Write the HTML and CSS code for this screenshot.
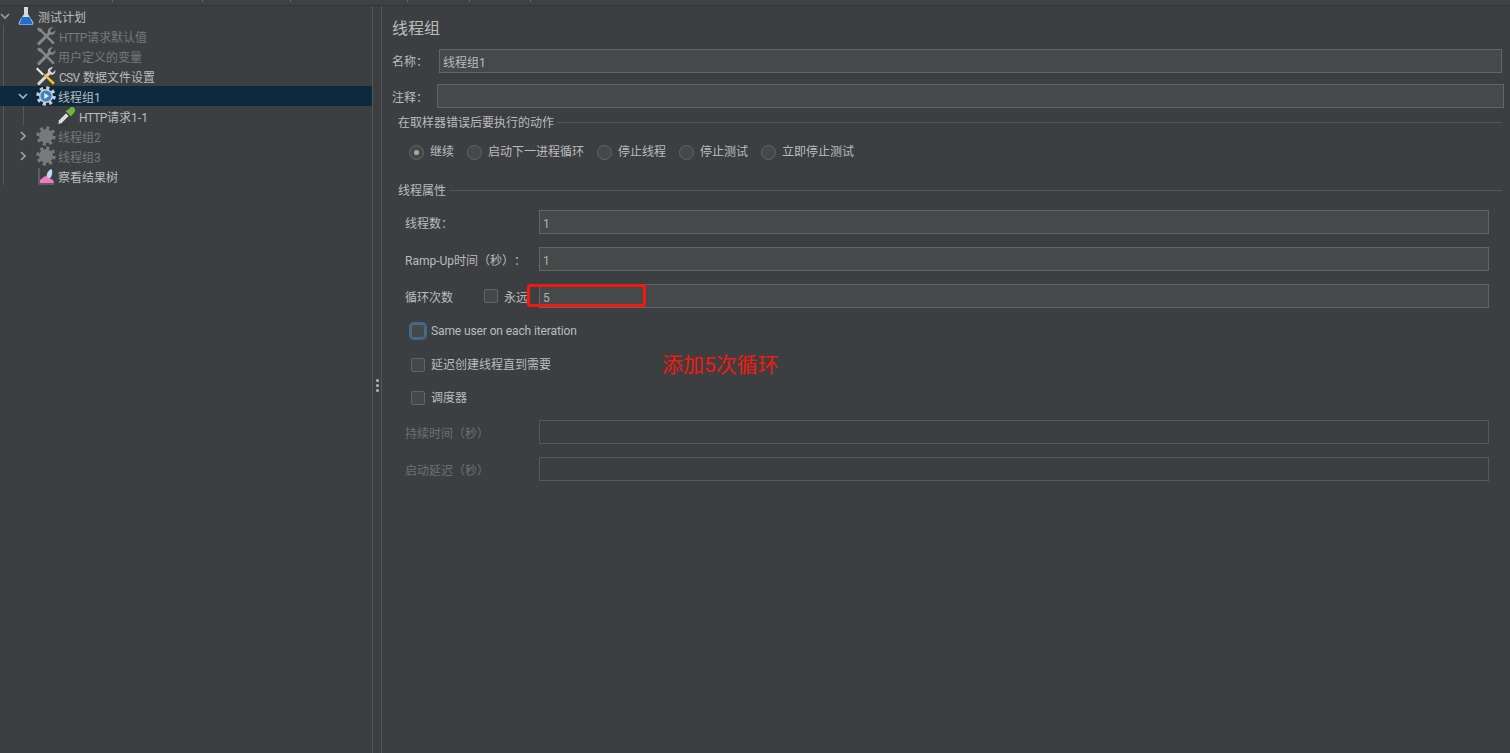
FILE: index.html
```html
<!DOCTYPE html>
<html lang="zh">
<head>
<meta charset="utf-8">
<title>线程组</title>
<link rel="stylesheet" href="styles.css">
</head>
<body>
<svg class="defs" width="0" height="0" aria-hidden="true">
  <defs>
    <symbol id="gear" viewBox="0 0 20 20">
      <circle cx="10" cy="10" r="7" fill="currentColor"/>
      <circle cx="10" cy="10" r="8" fill="none" stroke="currentColor" stroke-width="3.4" stroke-dasharray="3.14 3.14"/>
    </symbol>
    <symbol id="tools" viewBox="0 0 20 20">
      <path d="M2.500 1.500 L1 3 L3 5.500 L4.800 6 L17 18.500 L18.800 16.800 L6.500 4.600 L6 3 Z" fill="currentColor"/>
      <path d="M1.500 16.700 L12 6.200 C11.300 3.600 13.600 .8 17 1.400 L14.200 4.200 L15 6 L16.800 6.700 L19.400 4 C19.800 7.400 17 9.600 14.200 8.600 L3.600 19 C2.400 19.600 .9 18 1.500 16.700 Z" fill="currentColor"/>
    </symbol>
  </defs>
</svg>
<div class="app">
  <div class="topbar"><span class="tick"></span><span class="tick"></span><span class="tick"></span><span class="tick"></span><span class="tick"></span><span class="tick"></span></div>
  <div class="main">
    <nav class="tree">
      <div class="guide guide-root"></div>
      <div class="guide guide-group"></div>
      <div class="row">
        <svg class="chev" viewBox="0 0 10 10"><path d="M1 3 L5 7 L9 3" fill="none" stroke="#9a9da0" stroke-width="1.6"/></svg>
        <svg class="icon" viewBox="0 -1 20 20"><path d="M8 0 H12 V7 L17 15 C18 17 17 18 15.500 18 H4.500 C3 18 2 17 3 15 L8 7 Z" fill="#d5dade"/><path d="M6.500 10 H13.500 L16.500 16 C16.800 17 16 17.500 15.500 17.500 H4.500 C4 17.500 3.200 17 3.500 16 Z" fill="#1f6fd0"/></svg>
        <span class="label">测试计划</span>
      </div>
      <div class="row lv1 off">
        <span class="chev"></span>
        <svg class="icon tools-off"><use href="#tools"/></svg>
        <span class="label"><span class="lat">HTTP</span>请求默认值</span>
      </div>
      <div class="row lv1 off">
        <span class="chev"></span>
        <svg class="icon tools-off"><use href="#tools"/></svg>
        <span class="label">用户定义的变量</span>
      </div>
      <div class="row lv1">
        <span class="chev"></span>
        <svg class="icon" viewBox="0 0 20 20"><path d="M1.500 16.700 L12 6.200 C11.300 3.600 13.600 .8 17 1.400 L14.200 4.200 L15 6 L16.800 6.700 L19.400 4 C19.800 7.400 17 9.600 14.200 8.600 L3.600 19 C2.400 19.600 .9 18 1.500 16.700 Z" fill="#d4d6d8"/><path d="M1.500 1.500 L8 8 L6.500 9.500 L0 3 Z" fill="#e8e8e8"/><path d="M8 8 L10 8.500 L18.800 16.800 L17 18.800 L8.800 10.500 Z" fill="#f2c230"/></svg>
        <span class="label"><span class="lat">CSV</span> 数据文件设置</span>
      </div>
      <div class="row lv1 selected">
        <svg class="chev" viewBox="0 0 10 10"><path d="M1 3 L5 7 L9 3" fill="none" stroke="#a8b4bc" stroke-width="1.6"/></svg>
        <svg class="icon gear-on"><use href="#gear"/></svg>
        <svg class="play" viewBox="0 0 20 20"><circle cx="10" cy="10" r="5.500" fill="#3f7fc4"/><path d="M8.300 7 L13 10 L8.300 13 Z" fill="#e4eef8"/></svg>
        <span class="label">线程组1</span>
      </div>
      <div class="row lv2">
        <span class="chev"></span>
        <svg class="icon" viewBox="0 0 20 20"><path d="M2.500 14.500 L10 7 L13 10 L5.500 17.500 L2 18.500 Z" fill="#d8dadc" stroke="#4a4d4f" stroke-width=".8"/><path d="M9.500 5 L15 10.500 L16.500 8.500 C19 7 20 3 18 1.500 C16 .3 13.500 1 12.500 3.500 Z" fill="#6fb43c"/><path d="M2 19.200 H12" stroke="#2e3032" stroke-width="1"/></svg>
        <span class="label"><span class="lat">HTTP</span>请求1-1</span>
      </div>
      <div class="row lv1 off">
        <svg class="chev" viewBox="0 0 10 10"><path d="M3 1 L7 5 L3 9" fill="none" stroke="#a0a3a6" stroke-width="1.600"/></svg>
        <svg class="icon gear-off"><use href="#gear"/></svg>
        <span class="label">线程组2</span>
      </div>
      <div class="row lv1 off">
        <svg class="chev" viewBox="0 0 10 10"><path d="M3 1 L7 5 L3 9" fill="none" stroke="#a0a3a6" stroke-width="1.600"/></svg>
        <svg class="icon gear-off"><use href="#gear"/></svg>
        <span class="label">线程组3</span>
      </div>
      <div class="row lv1">
        <span class="chev"></span>
        <svg class="icon" viewBox="0 0 20 20"><path d="M3 2 V18 H18" fill="none" stroke="#7d8083" stroke-width="1"/><path d="M4 17 V14 L9 10 L13 12 L17 14 L18 17 Z" fill="#f07ac0"/><path d="M10.500 11 C10.500 7 13 3.500 15.500 3 C17 6 16 11 13.500 12.500 Z" fill="#bcdcf5"/></svg>
        <span class="label">察看结果树</span>
      </div>
    </nav>
    <div class="splitter"><span class="dot"></span><span class="dot"></span><span class="dot"></span></div>
    <main class="panel">
      <h1 class="title">线程组</h1>
      <div class="name-row">
        <label class="name-label">名称：</label>
        <div class="field name-field">线程组1</div>
      </div>
      <div class="note-row">
        <label class="name-label">注释：</label>
        <div class="field note-field"></div>
      </div>
      <section class="group action-group">
        <div class="legend"><span class="legend-text">在取样器错误后要执行的动作</span></div>
        <div class="radios">
          <div class="radio-item"><span class="radio checked"></span>继续</div>
          <div class="radio-item"><span class="radio"></span>启动下一进程循环</div>
          <div class="radio-item"><span class="radio"></span>停止线程</div>
          <div class="radio-item"><span class="radio"></span>停止测试</div>
          <div class="radio-item"><span class="radio"></span>立即停止测试</div>
        </div>
      </section>
      <section class="group props-group">
        <div class="legend"><span class="legend-text">线程属性</span></div>
        <div class="prop first-prop"><span class="prop-label">线程数：</span><div class="field prop-field">1</div></div>
        <div class="prop"><span class="prop-label">Ramp-Up时间（秒）：</span><div class="field prop-field">1</div></div>
        <div class="prop loop">
          <span class="loop-label">循环次数</span>
          <span class="box"></span><span class="loop-forever">永远</span>
          <div class="field prop-field">5</div>
          <div class="red-box"></div>
        </div>
        <div class="check same"><span class="box focus"></span><span class="same-text">Same user on each iteration</span></div>
        <div class="check delay"><span class="box"></span>延迟创建线程直到需要<span class="note-red">添加5次循环</span></div>
        <div class="check sched"><span class="box"></span>调度器</div>
        <div class="prop dim first-dim"><span class="prop-label">持续时间（秒）</span><div class="field prop-field blank"></div></div>
        <div class="prop dim"><span class="prop-label">启动延迟（秒）</span><div class="field prop-field blank"></div></div>
      </section>
    </main>
  </div>
</div>
</body>
</html>
```
FILE: styles.css
```css
* { box-sizing: border-box; }
html, body { margin: 0; height: 100%; }
body {
  background: #3c3f41;
  color: #bbbbbb;
  font: 12px/16px Roboto, "Noto Sans CJK SC", sans-serif;
  font-feature-settings: "chws" 0, "palt" 0, "halt" 0;
  text-spacing-trim: space-all;
  overflow: hidden;
}
.defs { position: absolute; }
.app { display: flex; flex-direction: column; height: 753px; }
.topbar {
  height: 6px;
  background: #3e4244;
  border-bottom: 1px solid #323537;
  display: grid;
  grid-template-columns: 113px 90px 88px 117px 62px 61px;
  justify-content: start;
  align-items: start;
}
.tick { height: 2px; border-right: 1px solid #636668; }
.main { display: flex; flex: 1; min-height: 0; }

.tree { position: relative; width: 372px; flex: none; }
.guide { position: absolute; width: 1px; background: #55585a; }
.guide-root { left: 3px; top: 19px; height: 160px; }
.guide-group { left: 23px; top: 100px; height: 19px; }
.row { display: flex; align-items: center; height: 20px; position: relative; color: #bbbbbb; }
.lv1 { padding-left: 18px; }
.lv2 { padding-left: 39px; }
.selected { background: #0d293e; }
.off { color: #777777; }
.chev { width: 10px; height: 10px; flex: none; margin-right: 6px; }
.icon { width: 20px; height: 20px; flex: none; margin-right: 2px; }
.lv1 > .icon { margin-left: 2px; }
.lv2 > .icon { margin-left: 1px; margin-right: 3px; }
.label { padding-top: 4px; }
.lat { letter-spacing: -.7px; margin-left: 1px; margin-right: .5px; }
.lv2 .lat { margin-left: 0; }
.tools-off { color: #85888a; }
.gear-on { color: #c8ced3; }
.gear-off { color: #77797b; }
.play { position: absolute; left: 36px; top: 0; width: 20px; height: 20px; }

.splitter {
  position: relative;
  width: 10px;
  flex: none;
  border-left: 1px solid #525557;
  border-right: 1px solid #525557;
  display: flex;
  flex-direction: column;
  align-items: center;
  justify-content: center;
  gap: 2px;
  padding-top: 12px;
}
.dot { width: 3px; height: 3px; border-radius: 50%; background: #b5b7b9; }

.panel { flex: 1; min-width: 0; padding: 0 6px 0 10px; }
.title { margin: 0; font-size: 16px; font-weight: 400; line-height: 24px; padding-top: 11px; height: 43px; color: #bbbbbb; }
.name-row, .note-row { display: flex; align-items: center; height: 24px; }
.name-row { padding-right: 2px; }
.note-row { margin-top: 11px; }
.name-label { width: 47px; flex: none; padding-top: 2px; }
.note-row .name-label { width: 45px; padding-top: 4px; }
.field {
  flex: 1;
  height: 24px;
  background: #45494a;
  border: 1px solid #646464;
  padding: 0 3px;
  line-height: 26px;
  min-width: 0;
}
.group { padding-left: 6px; }
.legend { display: flex; align-items: center; height: 16px; margin-right: 2px; }
.legend-text { padding-top: 2px; }
.legend::after { content: ""; flex: 1; height: 1px; background: #525557; margin-left: 3px; }
.action-group { margin-top: 6px; }
.radios { display: flex; margin-top: 12px; padding-left: 11px; height: 20px; align-items: center; }
.radio-item { display: flex; align-items: center; margin-right: 13px; }
.radio {
  width: 15px; height: 15px; border-radius: 50%;
  border: 1px solid #646464; background: #43494a;
  margin-right: 6px; display: flex; align-items: center; justify-content: center;
}
.checked::after { content: ""; width: 5px; height: 5px; border-radius: 50%; background: #a9a9a9; }
.props-group { margin-top: 20px; }
.prop { display: flex; align-items: center; height: 24px; margin-top: 13px; padding-left: 7px; padding-right: 15px; position: relative; }
.first-prop { margin-top: 12px; }
.prop-label, .loop-label { padding-top: 4px; }
.prop-label { width: 134px; flex: none; }
.loop-label { width: 79px; flex: none; }
.box {
  width: 14px; height: 14px; flex: none;
  border: 1px solid #646464; border-radius: 2px; background: #43494a;
  display: inline-block;
}
.loop-forever { width: 35px; flex: none; margin-left: 6px; padding-top: 4px; white-space: nowrap; }
.red-box {
  position: absolute; left: 129px; top: 0; width: 119px; height: 23px;
  border: 3px solid #f2190f; border-radius: 3px;
}
.check { display: flex; align-items: center; height: 20px; padding-left: 13px; gap: 6px; position: relative; }
.same { margin-top: 13px; }
.same-text { letter-spacing: -.11px; }
.delay { margin-top: 14px; }
.sched { margin-top: 13px; }
.focus { outline: 2px solid #3a6a96; border-radius: 3px; }
.note-red {
  position: absolute; left: 264px; top: -2px;
  font-size: 21px; line-height: 24px; color: #f2190f;
}
.dim { color: #6d7072; }
.first-dim { margin-top: 12px; }
.blank { background: transparent; border-color: #565859; }
.prop-field:not(.blank) { color: #a9b7a9; }
```
